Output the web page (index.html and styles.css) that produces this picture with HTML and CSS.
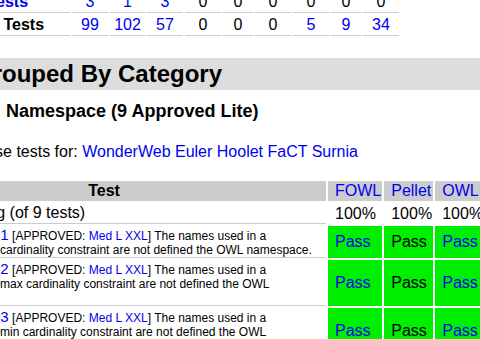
FILE: index.html
```html
<!DOCTYPE html>
<html>
<head>
<meta charset="utf-8">
<title>OWL Test Results</title>
<link rel="stylesheet" href="styles.css">
</head>
<body>
<div class="page">
  <table class="summary">
    <tr>
      <td class="label"><a href="#">DL Tests</a></td>
      <td class="w36"><a href="#">3</a></td>
      <td class="w35"><a href="#">1</a></td>
      <td class="w36"><a href="#">3</a></td>
      <td class="w36">0</td>
      <td class="w30">0</td>
      <td class="w36">0</td>
      <td class="w36">0</td>
      <td class="w30">0</td>
      <td class="w36">0</td>
    </tr>
    <tr>
      <td class="label">Total Tests</td>
      <td><a href="#">99</a></td>
      <td><a href="#">102</a></td>
      <td><a href="#">57</a></td>
      <td>0</td>
      <td>0</td>
      <td>0</td>
      <td><a href="#">5</a></td>
      <td><a href="#">9</a></td>
      <td><a href="#">34</a></td>
    </tr>
  </table>

  <h2 class="section">Grouped By Category</h2>

  <h3 class="category">Namespace (9 Approved Lite)</h3>

  <p class="run">Run these tests for: <a href="#">WonderWeb</a> <a href="#">Euler</a> <a href="#">Hoolet</a> <a href="#">FaCT</a> <a href="#">Surnia</a></p>

  <table class="results">
    <tr>
      <th class="test">Test</th>
      <th class="sys fowl"><a href="#">FOWL</a></th>
      <th class="sys pellet"><a href="#">Pellet</a></th>
      <th class="sys owlim"><a href="#">OWLIM</a></th>
    </tr>
    <tr>
      <td class="total">Total Passing (of 9 tests)</td>
      <td class="pct">100%</td>
      <td class="pct">100%</td>
      <td class="pct">100%</td>
    </tr>
    <tr>
      <td class="desc"><a class="tid" href="#">Manifest001</a> [APPROVED: <a href="#">Med</a> <a href="#">L</a> <a href="#">XXL</a>] The names used in a restriction&nbsp;with&nbsp;a cardinality constraint are not defined the OWL namespace.</td>
      <td class="pass"><a href="#">Pass</a></td>
      <td class="pass">Pass</td>
      <td class="pass"><a href="#">Pass</a></td>
    </tr>
    <tr>
      <td class="desc"><a class="tid" href="#">Manifest002</a> [APPROVED: <a href="#">Med</a> <a href="#">L</a> <a href="#">XXL</a>] The names used in a restriction&nbsp;with&nbsp;a max cardinality constraint are not defined the OWL namespace.</td>
      <td class="pass"><a href="#">Pass</a></td>
      <td class="pass">Pass</td>
      <td class="pass"><a href="#">Pass</a></td>
    </tr>
    <tr>
      <td class="desc"><a class="tid" href="#">Manifest003</a> [APPROVED: <a href="#">Med</a> <a href="#">L</a> <a href="#">XXL</a>] The names used in a restriction&nbsp;with&nbsp;a min cardinality constraint are not defined the OWL namespace.</td>
      <td class="pass"><a href="#">Pass</a></td>
      <td class="pass">Pass</td>
      <td class="pass"><a href="#">Pass</a></td>
    </tr>
  </table>
</div>
</body>
</html>
```
FILE: styles.css
```css
html, body {
  margin: 0;
  overflow: hidden;
}

body {
  font-family: "Liberation Sans", Arial, Helvetica, sans-serif;
  font-size: 16px;
  color: #000;
  background: #fff;
}

a {
  color: #0000ee;
  text-decoration: none;
}

.page {
  margin-top: -10px;
}

/* summary counts table */
.summary {
  border-collapse: separate;
  border-spacing: 2px;
  margin-left: -41px;
}

.summary td {
  padding: 1px 0;
  border-bottom: 1px solid #cccccc;
  text-align: center;
}

.summary td.label {
  text-align: left;
  font-weight: bold;
  padding: 1px;
  width: 107px;
}

.w36 { width: 36px; }
.w35 { width: 35px; }
.w30 { width: 30px; }

/* headings */
.section {
  margin: 20px 0 0 -60px;
  padding: 2px 0 2px 34px;
  font-size: 24px;
  background: #dddddd;
}

.category {
  font-size: 18px;
  margin: 11px 0 0 6px;
}

.run {
  margin: 21px 0 18px -61px;
}

/* results table */
.results {
  border-collapse: separate;
  border-spacing: 2px;
  margin-left: -120px;
  width: 700px;
}

.results th {
  background: #cccccc;
  padding: 1px;
  font-weight: bold;
}

.results th.test {
  width: 442px;
}

.results th.sys {
  font-weight: normal;
  text-align: left;
  padding: 1px 1px 1px 7px;
}

.results th.fowl { width: 46px; }
.results th.pellet { width: 41px; }

.results td.total {
  padding: 1px 1px 1px 28px;
  border-bottom: 1px solid #cccccc;
}

.results td.pct {
  padding: 1px 1px 1px 7px;
}

.results td.desc {
  font-size: 12px;
  vertical-align: top;
  padding: 0 1px 0 28px;
  text-indent: 17px;
  border-bottom: 1px solid #cccccc;
}

.tid {
  font-size: 15px;
}

.results td.pass {
  background: #00ee00;
  padding: 0 1px 0 7px;
  vertical-align: middle;
}
```
